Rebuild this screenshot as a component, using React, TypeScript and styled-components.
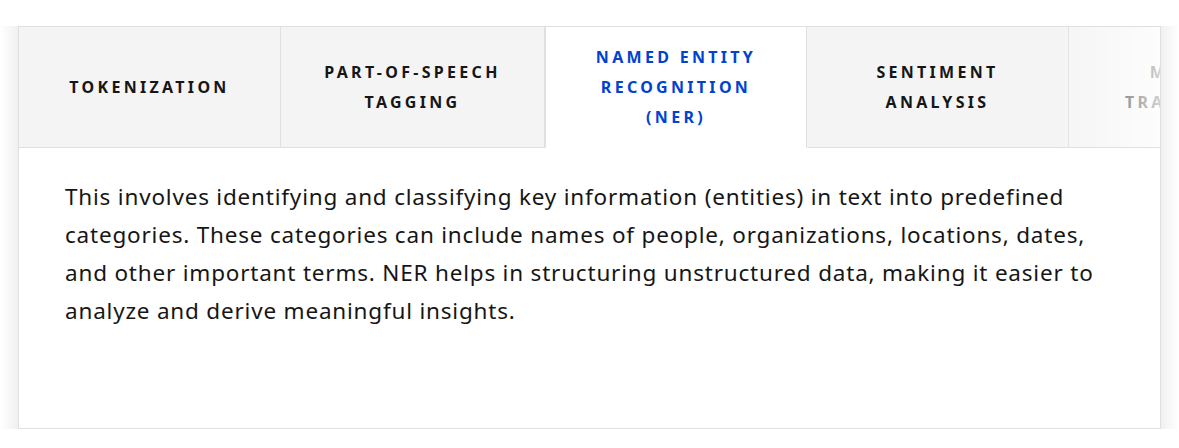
import React from "react";
import styled, { createGlobalStyle } from "styled-components";

const Global = createGlobalStyle`
  html, body { margin: 0; padding: 0; background: #ffffff; }
  body { font-family: "Noto Sans", "Liberation Sans", sans-serif; color: #161616; }
`;

const Page = styled.div`
  width: 1179px;
  height: 448px;
  padding-top: 26px;
  box-sizing: border-box;
  display: flex;
  align-items: flex-start;
`;

const SideFade = styled.div<{ $side: "left" | "right" }>`
  flex: 0 0 18px;
  height: 403px;
  background: linear-gradient(
    ${(p) => (p.$side === "left" ? "to right" : "to left")},
    rgba(255, 255, 255, 0) 0%,
    rgba(0, 0, 0, 0.06) 100%
  );
`;

const Card = styled.section`
  flex: 0 0 1143px;
  height: 403px;
  box-sizing: border-box;
  border: 1px solid #e0e0e0;
  background: #ffffff;
  display: flex;
  flex-direction: column;
  overflow: hidden;
`;

const TabStrip = styled.div`
  position: relative;
  display: flex;
  flex: 0 0 121px;
  overflow: hidden;
`;

const Tab = styled.div<{ $active?: boolean; $w: number }>`
  flex: 0 0 ${(p) => p.$w}px;
  box-sizing: border-box;
  height: 121px;
  display: flex;
  align-items: center;
  justify-content: center;
  text-align: center;
  padding: 0 20px;
  background: ${(p) => (p.$active ? "#ffffff" : "#f4f4f4")};
  border-right: 1px solid #e0e0e0;
  border-left: ${(p) => (p.$active ? "1px solid #e0e0e0" : "none")};
  border-bottom: ${(p) => (p.$active ? "1px solid transparent" : "1px solid #e0e0e0")};
  color: ${(p) => (p.$active ? "#0043ce" : "#161616")};
  font-size: 16px;
  font-weight: 700;
  letter-spacing: 3.3px;
  line-height: 30px;
  text-transform: uppercase;
  white-space: pre-line;
`;

const StripFade = styled.div`
  position: absolute;
  top: 0;
  right: 0;
  width: 110px;
  height: 120px;
  pointer-events: none;
  background: linear-gradient(to right, rgba(255, 255, 255, 0) 0%, rgba(255, 255, 255, 0.8) 100%);
`;

const Panel = styled.div`
  padding: 30px 46px 0 46px;
  font-size: 22.5px;
  letter-spacing: 0.8px;
  line-height: 38px;
  color: #161616;
`;

const tabs = [
  { label: "Tokenization", w: 262 },
  { label: "Part-of-speech\ntagging", w: 264 },
  { label: "Named entity\nrecognition\n(NER)", w: 262, active: true },
  { label: "Sentiment\nanalysis", w: 262 },
  { label: "Machine\ntranslation", w: 262 },
];

export default function App() {
  return (
    <>
      <Global />
      <Page>
        <SideFade $side="left" />
        <Card>
          <TabStrip>
            {tabs.map((t) => (
              <Tab key={t.label} $w={t.w} $active={t.active}>
                {t.label}
              </Tab>
            ))}
            <StripFade />
          </TabStrip>
          <Panel>
            This involves identifying and classifying key information (entities) in text into predefined
            categories. These categories can include names of people, organizations, locations, dates,
            and other important terms. NER helps in structuring unstructured data, making it easier to
            analyze and derive meaningful insights.
          </Panel>
        </Card>
        <SideFade $side="right" />
      </Page>
    </>
  );
}
